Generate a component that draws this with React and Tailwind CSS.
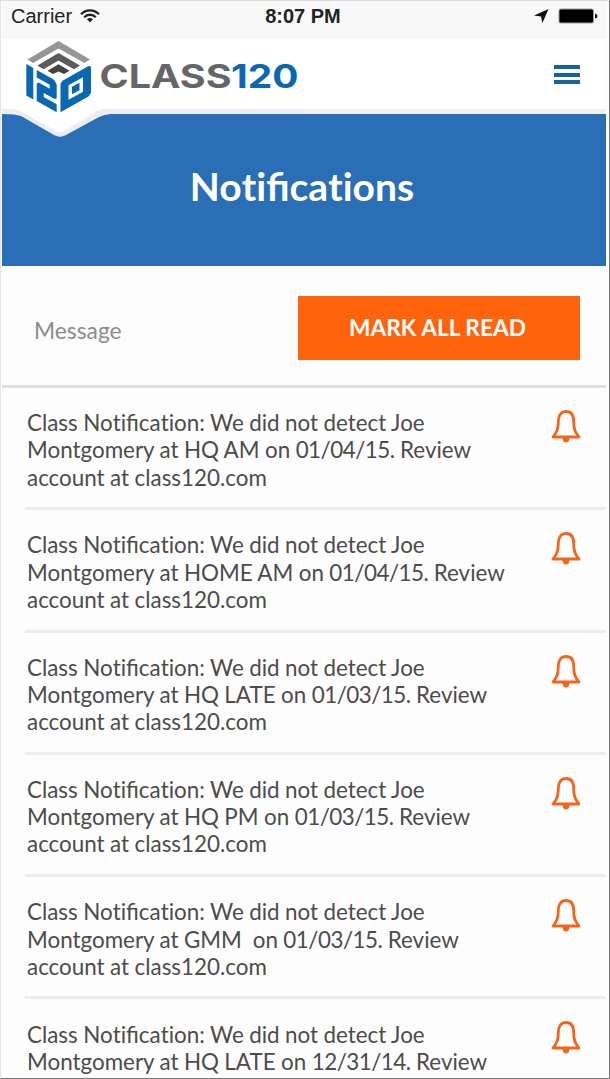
import React from "react";

const notifications = [
  ["Class Notification: We did not detect Joe", "Montgomery at HQ AM on 01/04/15. Review", "account at class120.com"],
  ["Class Notification: We did not detect Joe", "Montgomery at HOME AM on 01/04/15. Review", "account at class120.com"],
  ["Class Notification: We did not detect Joe", "Montgomery at HQ LATE on 01/03/15. Review", "account at class120.com"],
  ["Class Notification: We did not detect Joe", "Montgomery at HQ PM on 01/03/15. Review", "account at class120.com"],
  ["Class Notification: We did not detect Joe", "Montgomery at GMM  on 01/03/15. Review", "account at class120.com"],
  ["Class Notification: We did not detect Joe", "Montgomery at HQ LATE on 12/31/14. Review", "account at class120.com"],
];

// Keeps the "fi" ligature but not "ti", and sets dates slightly tighter.
function Copy({ text }) {
  return text.split(/(t(?=i)|\d\d\/\d\d\/\d\d\.)/).map((part, i) => {
    if (part === "t") return <span key={i} className="[font-variant-ligatures:none]">t</span>;
    if (/^\d\d\//.test(part)) return <span key={i} className="tracking-[-0.5px]">{part}</span>;
    return part;
  });
}

function WifiIcon() {
  return (
    <svg width="20" height="14" viewBox="0 0 20 14" fill="none" stroke="#222" strokeWidth="2.3">
      <path d="M1 5.2C6 0 14 0 19 5.2" />
      <path d="M4.2 8.2C7.4 4.9 12.6 4.9 15.8 8.2" />
      <path d="M7 10.2C8.6 8.6 11.4 8.6 13 10.2L10 13.4Z" fill="#222" stroke="none" />
    </svg>
  );
}

function StatusBar() {
  return (
    <div className="grid h-[38px] grid-cols-3 items-start bg-[#f8f8f8] font-['Liberation_Sans',sans-serif] text-[20px] leading-[30px] text-[#222]">
      <div className="flex items-center gap-[8px] pl-[9px]">
        <span className="text-[20px]">Carrier</span>
        <WifiIcon />
      </div>
      <div className="pr-[2px] text-center font-bold">8:07 PM</div>
      <div className="flex h-[30px] items-center justify-end gap-[9px] pr-[8px]">
        <svg width="15" height="14" viewBox="0 0 15 14">
          <path d="M14.5 0 8.4 14 7 7.6 0 6.4Z" fill="#111" />
        </svg>
        <svg width="40" height="16" viewBox="0 0 40 16">
          <rect x="0.5" y="0.5" width="35.5" height="15" rx="2.5" fill="#999" />
          <rect x="1.5" y="1.5" width="33.5" height="13" rx="1.5" fill="#000" />
          <path d="M37 5.5Q39.5 6 39.5 8T37 10.5Z" fill="#111" />
        </svg>
      </div>
    </div>
  );
}

function CubeLogo() {
  return (
    <svg width="68" height="74" viewBox="25 40 68 74" fill="none">
      <path d="M27.5 59.5 58.5 41 90 59.5 84.500 63 58.5 48.500 33 63Z" fill="#969696" />
      <path d="M37.500 65.500 58.500 53 80 65.500 74 69.200 58.500 60.500 43.500 69.200Z" fill="#5c5c5c" />
      <path d="M47.500 70.700 58.500 64.300 69.500 70.700 64 74 58.500 71.500 53 74Z" fill="#444" />
      <g fill="#0968b0">
        <path d="M26.300 64 33.300 68V99.500L26.300 95.500Z" />
        <path transform="matrix(1 .56 0 1 36.700 70)" d="M0 0H17L20 3V17L18 19H7V23H20V31H0V13.500L2 11.500H13V7.500H0Z" />
        <path transform="matrix(1 -.56 0 1 60.500 81.800)" fillRule="evenodd" d="M2 0H28L30.500 2V28L28 30.500H0V2ZM8 8V22.500H22.500V8Z" />
        <path transform="matrix(1 -.56 0 1 60.500 81.800)" d="M11.500 11.500H19V19H11.500Z" />
      </g>
    </svg>
  );
}

function Header() {
  return (
    <header className="relative flex h-[75px] items-start justify-between border-b-[5px] border-[#f0f1f3] bg-white">
      <svg className="absolute left-0 top-[66px] z-10" width="303" height="36" viewBox="2 105 303 36">
        <path d="M2 108H303V114H111Q104 114.500 99 117L66 135Q60 138.500 54 135L21 116Q16 114 2 114Z" fill="#e9edf4" />
        <path d="M2 105H303V109H104Q98 109.500 94 113L65 130.500Q60 133.500 55 130.500L22 112Q18 109 10 109H2Z" fill="#fff" />
      </svg>
      <div className="relative z-20 flex pl-[23px] pt-[1px]">
        <CubeLogo />
        <svg className="ml-[5px] mt-[17px]" width="205" height="38" viewBox="98 57 205 38" fontFamily="Inter, sans-serif">
          <text x="99.500" y="88.200" fontSize="32.500" fontWeight="700" fill="#666" textLength="132" lengthAdjust="spacingAndGlyphs">CLASS</text>
          <text x="231" y="88.200" fontSize="32.500" fontWeight="700" fill="#0968b0" textLength="67.500" lengthAdjust="spacingAndGlyphs">120</text>
        </svg>
      </div>
      <div className="mr-[26px] mt-[26px] flex flex-col gap-[3.500px]">
        <span className="h-[4px] w-[26px] bg-[#17639f]" />
        <span className="h-[4px] w-[26px] bg-[#17639f]" />
        <span className="h-[4px] w-[26px] bg-[#17639f]" />
      </div>
    </header>
  );
}

function BellIcon() {
  return (
    <svg width="30" height="34" viewBox="0 0 30 34" fill="none" stroke="#f2661b" strokeWidth="2.800" strokeLinejoin="round">
      <path d="M15 1.500C9.500 1.500 7.300 6 7.300 11.500C7.300 19 6 22 2 27H28C24 22 22.700 19 22.700 11.500C22.700 6 20.500 1.500 15 1.500Z" />
      <path d="M11.500 28H18.500C18.500 34 11.500 34 11.500 28Z" fill="#f2661b" stroke="none" />
    </svg>
  );
}

function NotificationRow({ lines }) {
  return (
    <li className="ml-[23px] flex h-[122.300px] shrink-0 items-start justify-between border-b-[3px] border-[#ededed] pl-[2px] pr-[25px] pt-[22px]">
      <p className="mt-[-0.900px] whitespace-pre text-[22.400px] leading-[27.200px] text-[#4c4c4c] [word-spacing:-0.300px]">
        {lines.map((line) => (
          <span key={line} className="block"><Copy text={line} /></span>
        ))}
      </p>
      <BellIcon />
    </li>
  );
}

export default function App() {
  return (
    <div className="h-[1079px] w-[610px] overflow-hidden border-b border-l border-r border-t border-b-[#777] border-l-[#e4e4e4] border-r-[#777] border-t-[#ddd] bg-[#fdfdfd] pl-px pr-[3px] font-[Lato,sans-serif]">
      <div className="h-[1073px] overflow-hidden">
        <StatusBar />
        <Header />
        <section className="flex h-[152px] items-center justify-center bg-[#2a6eb6] pb-[7px] pr-[4px]">
          <h1 className="text-[39px] font-bold leading-none text-white"><Copy text="Notifications" /></h1>
        </section>
        <section className="flex h-[122px] items-center justify-between border-b-[3px] border-[#dfdfdf] pl-[32px] pr-[26px] pt-[4px]">
          <span className="pt-[6px] text-[22.800px] text-[#8c8c8c]">Message</span>
          <button className="h-[64px] w-[282px] bg-[#ff640d] pr-[3px] pt-[2px] text-[22.700px] font-bold text-white">MARK ALL READ</button>
        </section>
        <ul className="flex flex-col">
          {notifications.map((lines, i) => (
            <NotificationRow key={i} lines={lines} />
          ))}
        </ul>
      </div>
    </div>
  );
}
